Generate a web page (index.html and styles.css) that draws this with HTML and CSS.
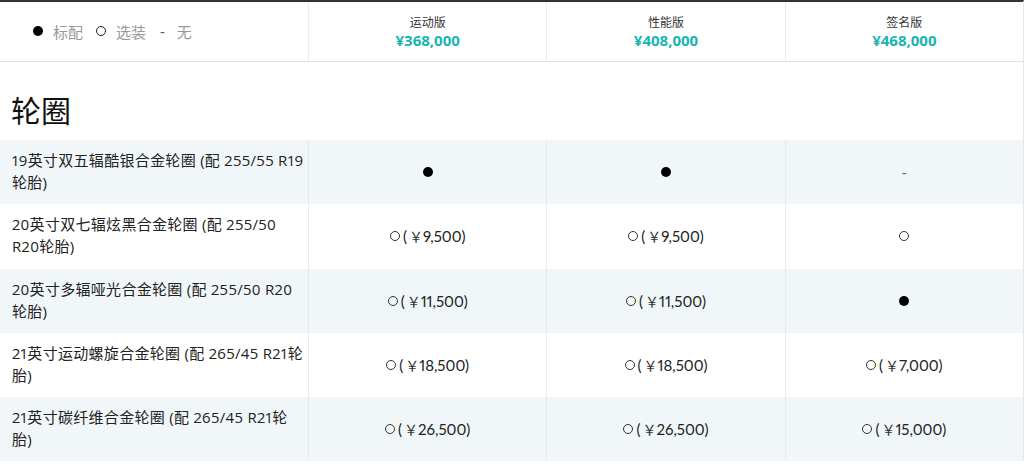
FILE: index.html
```html
<!DOCTYPE html>
<html lang="zh">
<head>
<meta charset="utf-8">
<link rel="stylesheet" href="styles.css">
</head>
<body>
<div class="spec">
  <div class="head">
    <div class="legend">
      <span class="ic dot"></span><span class="lg">标配</span>
      <span class="ic ring"></span><span class="lg">选装</span>
      <span class="mk dash">-</span><span class="lg">无</span>
    </div>
    <div class="ver"><div class="vname">运动版</div><div class="price">¥368,000</div></div>
    <div class="ver"><div class="vname">性能版</div><div class="price">¥408,000</div></div>
    <div class="ver"><div class="vname">签名版</div><div class="price">¥468,000</div></div>
  </div>
  <div class="section">
    <h2 class="stitle">轮圈</h2>
  </div>
  <div class="row alt">
    <div class="name">19英寸双五辐酷银合金轮圈 (配 255/55 R19 轮胎)</div>
    <div class="val"><span class="ic dot"></span></div>
    <div class="val"><span class="ic dot"></span></div>
    <div class="val"><span class="none">-</span></div>
  </div>
  <div class="row">
    <div class="name">20英寸双七辐炫黑合金轮圈 (配 255/50 R20轮胎)</div>
    <div class="val"><span class="ic ring"></span>(<span class="yen">￥</span>9,500)</div>
    <div class="val"><span class="ic ring"></span>(<span class="yen">￥</span>9,500)</div>
    <div class="val"><span class="ic ring solo"></span></div>
  </div>
  <div class="row alt">
    <div class="name">20英寸多辐哑光合金轮圈 (配 255/50 R20 轮胎)</div>
    <div class="val"><span class="ic ring"></span>(<span class="yen">￥</span>11,500)</div>
    <div class="val"><span class="ic ring"></span>(<span class="yen">￥</span>11,500)</div>
    <div class="val"><span class="ic dot"></span></div>
  </div>
  <div class="row">
    <div class="name">21英寸运动螺旋合金轮圈 (配 265/45 R21轮胎)</div>
    <div class="val"><span class="ic ring"></span>(<span class="yen">￥</span>18,500)</div>
    <div class="val"><span class="ic ring"></span>(<span class="yen">￥</span>18,500)</div>
    <div class="val"><span class="ic ring"></span>(<span class="yen">￥</span>7,000)</div>
  </div>
  <div class="row alt">
    <div class="name">21英寸碳纤维合金轮圈 (配 265/45 R21轮胎)</div>
    <div class="val"><span class="ic ring"></span>(<span class="yen">￥</span>26,500)</div>
    <div class="val"><span class="ic ring"></span>(<span class="yen">￥</span>26,500)</div>
    <div class="val"><span class="ic ring"></span>(<span class="yen">￥</span>15,000)</div>
  </div>
</div>
</body>
</html>
```

FILE: styles.css
```css
html, body {
  margin: 0;
  padding: 0;
  background: #fff;
}
body {
  font-family: "Open Sans", "Noto Sans CJK SC", sans-serif;
  color: #222;
}
.spec {
  width: 1023px;
  border-top: 2px solid #333;
  border-right: 1px solid #e6e6e6;
}
.head, .row {
  display: grid;
  grid-template-columns: 308px 1fr 1fr 1fr;
}
.head {
  height: 59px;
  border-bottom: 1px solid #e2e2e2;
}
.head > div + div {
  border-left: 1px solid #ececec;
}
.ic {
  display: inline-block;
  box-sizing: border-box;
  border-radius: 50%;
  flex: none;
}
.ic.dot {
  width: 10px;
  height: 10px;
  background: #000;
}
.ic.ring {
  width: 10px;
  height: 10px;
  border: 1.3px solid #333;
  margin-right: 3px;
}
.ic.ring.solo {
  margin-right: 0;
}
.legend {
  display: flex;
  align-items: center;
  padding-left: 33px;
  padding-bottom: 1px;
  font-size: 15px;
  color: #999;
}
.legend .ic {
  margin-right: 10px;
}
.legend .ic.ring {
  border-width: 1.6px;
  border-color: #222;
}
.legend .lg {
  margin-right: 13px;
}
.legend .dash {
  color: #555;
  margin-left: 1px;
  margin-right: 12px;
}
.ver {
  display: flex;
  flex-direction: column;
  align-items: center;
  justify-content: center;
}
.vname {
  font-size: 12px;
  line-height: 16px;
  color: #333;
}
.price {
  font-size: 15px;
  font-weight: 700;
  line-height: 18px;
  color: #17b6b0;
}
.section {
  height: 78px;
  display: flex;
  align-items: flex-end;
}
.stitle {
  margin: 0 0 9px 11px;
  font-size: 30px;
  font-weight: 400;
  line-height: 40px;
  color: #111;
}
.row {
  height: 64.3px;
}
.row.alt {
  background: #f1f7f9;
}
.row > div + div {
  border-left: 1px solid #e6ebed;
}
.name {
  padding: 9px 2px 0 12px;
  font-size: 15px;
  line-height: 22px;
  letter-spacing: 0.3px;
  color: #222;
  font-variant-numeric: proportional-nums;
}
.val {
  display: flex;
  align-items: center;
  justify-content: center;
  font-family: "Lato", "Noto Sans CJK SC", sans-serif;
  font-size: 15px;
  color: #222;
  font-variant-numeric: proportional-nums;
}
.yen {
  font-family: "Noto Sans CJK SC", sans-serif;
  font-size: 14px;
  margin-left: 2px;
  color: #333;
}
.none {
  color: #666;
}
```
